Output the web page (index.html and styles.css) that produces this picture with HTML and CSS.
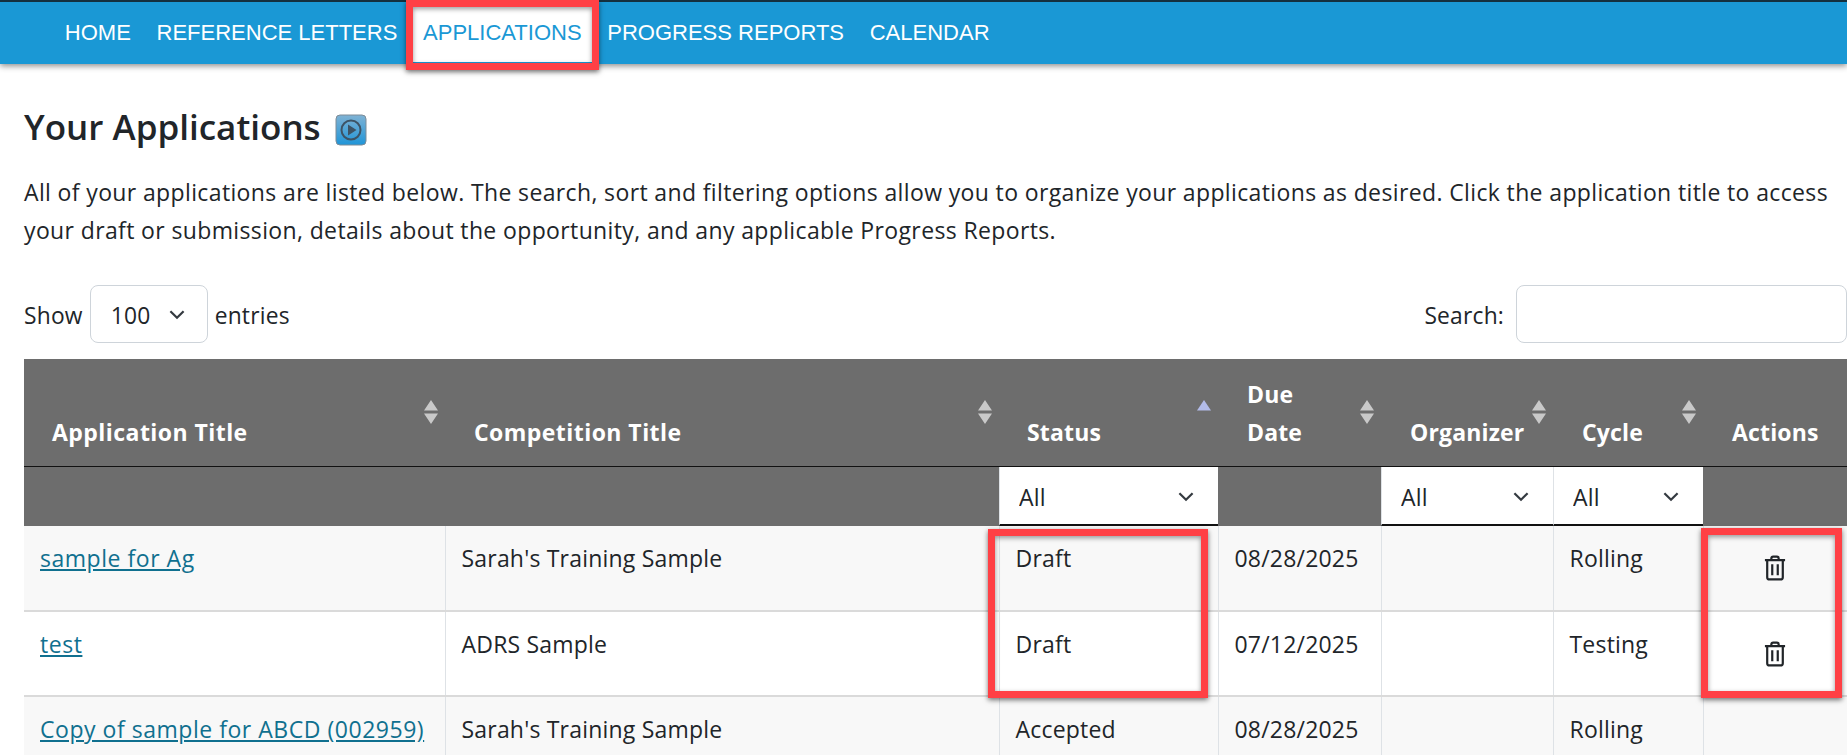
FILE: index.html
```html
<!DOCTYPE html>
<html lang="en">
<head>
<meta charset="utf-8">
<title>Your Applications</title>
<link rel="stylesheet" href="styles.css">
</head>
<body>
<div class="page">
  <nav class="topnav">
    <a class="navlink" href="#">HOME</a>
    <a class="navlink" href="#">REFERENCE LETTERS</a>
    <a class="navlink active" href="#">APPLICATIONS</a>
    <a class="navlink" href="#">PROGRESS REPORTS</a>
    <a class="navlink" href="#">CALENDAR</a>
  </nav>
  <main class="content">
    <h1 class="title">Your Applications
      <svg class="play" viewBox="0 0 32 32" aria-hidden="true">
        <defs><linearGradient id="pg" x1="0" y1="0" x2="0" y2="1"><stop offset="0" stop-color="#7fb2d4"/><stop offset="1" stop-color="#1f95d8"/></linearGradient></defs>
        <rect x="1" y="1" width="30" height="30" rx="4" fill="url(#pg)" stroke="#7d8c98"/>
        <circle cx="16" cy="16" r="9.5" fill="none" stroke="#3d5365" stroke-width="2"/>
        <path d="M13 10.5 L21.5 16 L13 21.5 Z" fill="#3d5365"/>
      </svg>
    </h1>
    <p class="intro">All of your applications are listed below. The search, sort and filtering options allow you to organize your applications as desired. Click the application title to access your draft or submission, details about the opportunity, and any applicable Progress Reports.</p>
    <div class="controls">
      <label class="lengthctl"><span class="ctltext">Show</span>
        <span class="selwrap lenwrap">
          <select class="lensel"><option>100</option></select>
          <svg class="chev" viewBox="0 0 16 10"><path d="M2 2 L8 8 L14 2" fill="none" stroke="#343a40" stroke-width="2"/></svg>
        </span>
        <span class="ctltext">entries</span></label>
      <label class="searchctl"><span class="ctltext">Search:</span> <input class="searchbox" type="text"></label>
    </div>
    <table class="apps">
      <colgroup>
        <col class="c1"><col class="c2"><col class="c3"><col class="c4"><col class="c5"><col class="c6"><col class="c7">
      </colgroup>
      <thead>
        <tr class="headrow">
          <th class="wide">Application Title<svg class="sort" viewBox="0 0 14 24"><path d="M7 0 L14 10.5 H0 Z M7 24 L14 13.5 H0 Z"/></svg></th>
          <th class="wide">Competition Title<svg class="sort" viewBox="0 0 14 24"><path d="M7 0 L14 10.5 H0 Z M7 24 L14 13.5 H0 Z"/></svg></th>
          <th>Status<svg class="sort" viewBox="0 0 14 24"><path class="asc" d="M7 0 L14 10.5 H0 Z"/></svg></th>
          <th class="tight">Due<br>Date<svg class="sort" viewBox="0 0 14 24"><path d="M7 0 L14 10.5 H0 Z M7 24 L14 13.5 H0 Z"/></svg></th>
          <th class="tight">Organizer<svg class="sort" viewBox="0 0 14 24"><path d="M7 0 L14 10.5 H0 Z M7 24 L14 13.5 H0 Z"/></svg></th>
          <th class="tight">Cycle<svg class="sort" viewBox="0 0 14 24"><path d="M7 0 L14 10.5 H0 Z M7 24 L14 13.5 H0 Z"/></svg></th>
          <th class="tight">Actions</th>
        </tr>
        <tr class="filterrow">
          <td></td><td></td>
          <td><span class="selwrap"><select class="filter"><option>All</option></select><svg class="chev" viewBox="0 0 16 10"><path d="M2 2 L8 8 L14 2" fill="none" stroke="#343a40" stroke-width="2"/></svg></span></td>
          <td></td>
          <td><span class="selwrap"><select class="filter"><option>All</option></select><svg class="chev" viewBox="0 0 16 10"><path d="M2 2 L8 8 L14 2" fill="none" stroke="#343a40" stroke-width="2"/></svg></span></td>
          <td><span class="selwrap"><select class="filter"><option>All</option></select><svg class="chev" viewBox="0 0 16 10"><path d="M2 2 L8 8 L14 2" fill="none" stroke="#343a40" stroke-width="2"/></svg></span></td>
          <td></td>
        </tr>
      </thead>
      <tbody>
        <tr class="odd">
          <td><a href="#">sample for Ag</a></td><td>Sarah's Training Sample</td><td>Draft</td><td>08/28/2025</td><td></td><td>Rolling</td>
          <td class="act"><svg class="trash" viewBox="0 0 24 28"><path d="M8 5 V3.5 Q8 1.5 10 1.5 H14 Q16 1.5 16 3.5 V5 M1 5.5 H23 M3.5 5.5 V24 Q3.5 26.5 6 26.5 H18 Q20.5 26.5 20.5 24 V5.5 M9 10 V22 M15 10 V22" fill="none" stroke="#212529" stroke-width="2.4"/></svg></td>
        </tr>
        <tr>
          <td><a href="#">test</a></td><td>ADRS Sample</td><td>Draft</td><td>07/12/2025</td><td></td><td>Testing</td>
          <td class="act"><svg class="trash" viewBox="0 0 24 28"><path d="M8 5 V3.5 Q8 1.5 10 1.5 H14 Q16 1.5 16 3.5 V5 M1 5.5 H23 M3.5 5.5 V24 Q3.5 26.5 6 26.5 H18 Q20.5 26.5 20.5 24 V5.5 M9 10 V22 M15 10 V22" fill="none" stroke="#212529" stroke-width="2.4"/></svg></td>
        </tr>
        <tr class="odd">
          <td><a href="#">Copy of sample for ABCD (002959)</a></td><td>Sarah's Training Sample</td><td>Accepted</td><td>08/28/2025</td><td></td><td>Rolling</td><td class="act"></td>
        </tr>
      </tbody>
    </table>
  </main>
  <div class="mark mark-nav"></div>
  <div class="mark mark-status"></div>
  <div class="mark mark-actions"></div>
</div>
</body>
</html>
```
FILE: styles.css
```css
* { box-sizing: border-box; }
html, body { margin: 0; height: 100%; overflow: hidden; background: #fff; }
body {
  font-family: "Open Sans", "Noto Sans", sans-serif;
  font-size: 23px;
  letter-spacing: .37px;
  line-height: 38px;
  color: #212529;
}
.page { position: relative; width: 1847px; height: 755px; overflow: hidden; }

.topnav {
  display: flex;
  height: 64px;
  padding-left: 52px;
  background: #1a98d5;
  border-top: 2px solid #14303f;
  box-shadow: 0 2px 6px rgba(0,0,0,.45);
}
.navlink {
  display: block;
  height: 60px;
  padding: 0 12.85px;
  line-height: 62px;
  font-family: "Liberation Sans", Arial, sans-serif;
  font-size: 22px;
  letter-spacing: 0;
  color: #fff;
  text-decoration: none;
  white-space: nowrap;
}
.navlink.active { background: #fff; color: #1a98d5; }

.content { padding: 0 0 0 24px; }
.title {
  display: flex;
  align-items: center;
  gap: 14px;
  margin: 31px 0 0;
  font-size: 35px;
  letter-spacing: 0;
  line-height: 64px;
  font-weight: 600;
  color: #212529;
}
.play { width: 32px; height: 32px; flex: none; margin-top: 5px; }
.intro { width: 1812px; margin: 14px 0 0; }
.controls {
  display: flex;
  justify-content: space-between;
  align-items: center;
  height: 58px;
  margin-top: 36px;
  font-size: 22.8px;
  letter-spacing: .2px;
}
.lengthctl { display: flex; align-items: center; gap: 7px; }
.ctltext { padding-top: 3px; }
.selwrap { position: relative; display: block; }
.lensel {
  width: 118px;
  height: 58px;
  padding: 3px 0 0 20px;
  appearance: none;
  background: #fff;
  border: 1px solid #ced4da;
  border-radius: 8px;
  font: inherit;
  letter-spacing: inherit;
  color: #212529;
}
.chev { position: absolute; right: 22px; top: 50%; width: 18px; height: 11px; margin-top: -5px; }
.searchctl { display: flex; align-items: center; gap: 12px; }
.searchbox {
  width: 331px;
  height: 58px;
  background: #fff;
  border: 1px solid #ced4da;
  border-radius: 8px;
}

.apps {
  width: 1823px;
  margin-top: 16px;
  table-layout: fixed;
  border-collapse: collapse;
  font-size: 23px;
  letter-spacing: .2px;
}
.c1 { width: 421px; }
.c2 { width: 554px; }
.c3 { width: 219px; }
.c4 { width: 163px; }
.c5 { width: 172px; }
.c6 { width: 150px; }
.c7 { width: 144px; }
.headrow { height: 107px; background: #6d6d6d; }
.headrow th {
  position: relative;
  padding: 0 0 15px 28px;
  vertical-align: bottom;
  text-align: left;
  font-weight: 700;
  letter-spacing: .15px;
  color: #fff;
  line-height: 38px;
  border-bottom: 1px solid #111;
}
.headrow th.tight { padding-left: 29px; }
.headrow th.wide { letter-spacing: .45px; }
.headrow th.wide + th.wide { padding-left: 29px; }
.sort { position: absolute; right: 7px; top: 41px; width: 14px; height: 24px; fill: #c9c9c9; }
.asc { fill: #b3bcea; }
.filterrow { height: 60px; background: #6d6d6d; }
.filterrow td { padding: 0; vertical-align: top; }
.filter {
  display: block;
  width: 100%;
  height: 59px;
  padding: 4px 0 0 19px;
  appearance: none;
  background: #fff;
  border: 0;
  border-left: 1px solid #dee2e6;
  border-bottom: 2px solid #111;
  border-radius: 0;
  font: inherit;
  letter-spacing: inherit;
  color: #212529;
}
.filterrow .chev { right: 23px; top: 30px; margin-top: -6px; }

tbody tr { height: 85px; }
tbody tr.odd { background: #f8f8f8; }
tbody td {
  padding: 13px 16px 0;
  vertical-align: top;
  white-space: nowrap;
  border-left: 1px solid #dee2e6;
  border-bottom: 2px solid #dadada;
}
tbody td:first-child { border-left: 0; }
tbody a { color: #10708f; letter-spacing: .53px; }
.act { text-align: center; }
.trash { display: block; width: 22px; height: 26px; margin: 16px auto 0; }

.mark {
  position: absolute;
  border: 7px solid #ff4045;
  box-shadow: 0 2px 5px rgba(0,0,0,.55), inset 0 2px 5px rgba(0,0,0,.4);
  pointer-events: none;
}
.mark-nav { left: 406px; top: 0; width: 193px; height: 70px; }
.mark-status { left: 988px; top: 529px; width: 220px; height: 169px; }
.mark-actions { left: 1701px; top: 528px; width: 141px; height: 170px; }
```
